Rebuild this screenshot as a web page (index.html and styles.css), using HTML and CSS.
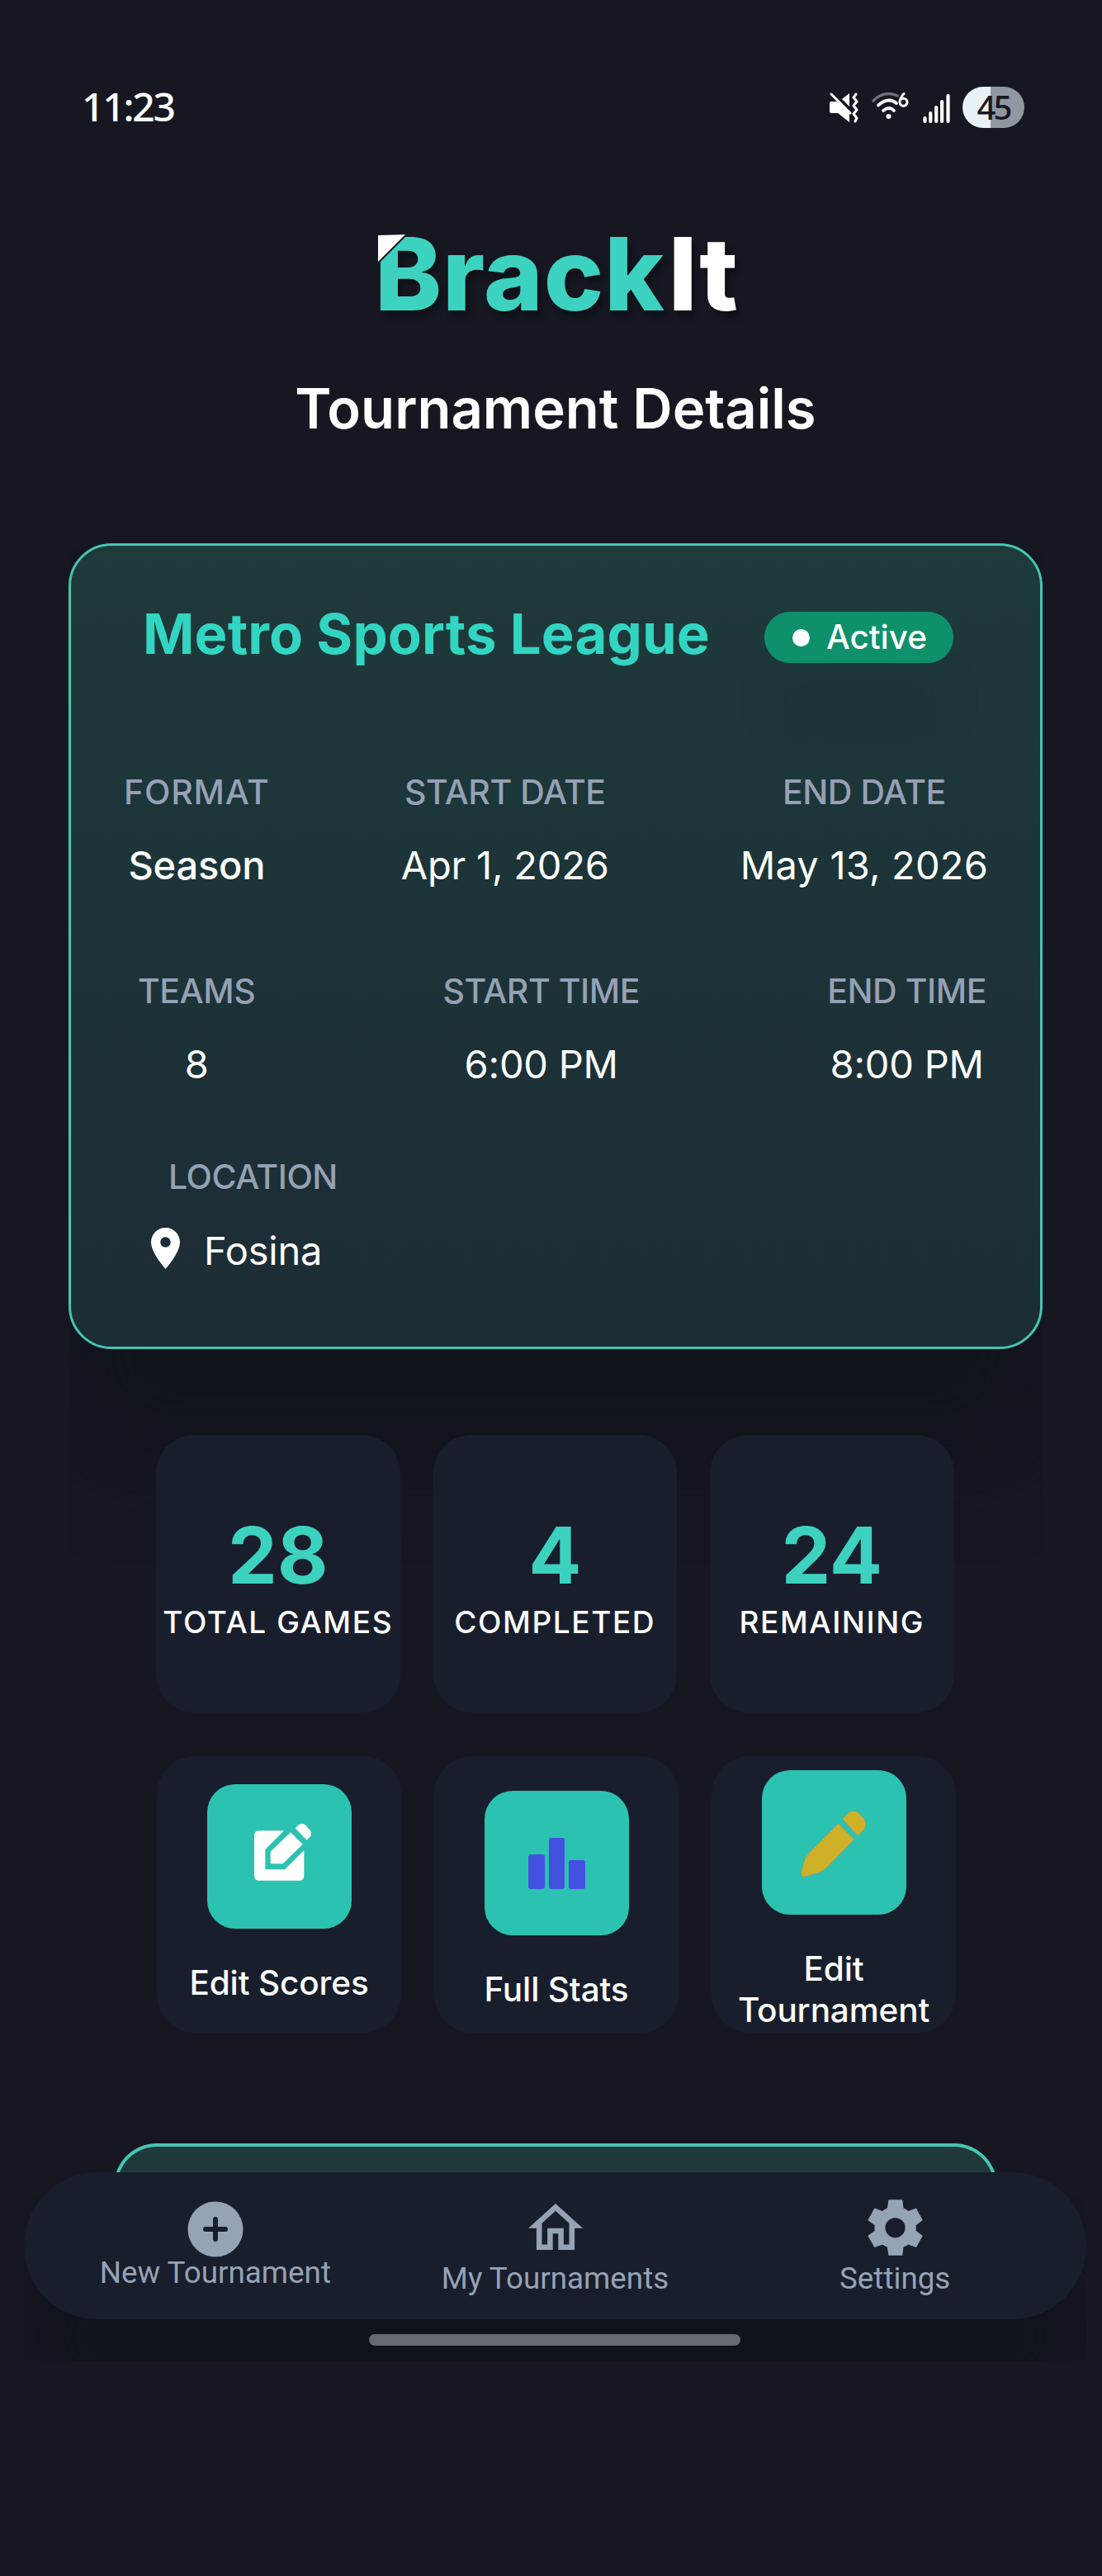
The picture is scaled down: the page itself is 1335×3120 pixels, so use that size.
FILE: index.html
```
<!DOCTYPE html>
<html lang="en">
<head>
<meta charset="utf-8">
<title>BrackIt – Tournament Details</title>
<link rel="stylesheet" href="styles.css">
</head>
<body>
<div class="screen">
  <header class="status">
    <span class="clock">11:23</span>
    <div class="status-icons">
      <svg class="mute" width="36" height="38" viewBox="0 0 36 38"><path d="M1 13q0-2 2-2h7L25 24v12L11 25H3q-2 0-2-2z" fill="#fff"/><path d="M16 8L25 1v16z" fill="#fff"/><path d="M3 2L26 25M33 2l-3 4 4 5-4 5 4 5-4 5 4 5-2 4" fill="none" stroke="#fff" stroke-width="3" stroke-linecap="round" stroke-linejoin="round"/></svg>
      <svg class="wifi" width="46" height="34" viewBox="0 0 46 34"><path d="M2 10Q15-3 31 4" fill="none" stroke="#6d7078" stroke-width="3.4" stroke-linecap="round"/><path d="M8 15.500Q20 5 30 13M14 22q7-6 13 0" fill="none" stroke="#fff" stroke-width="3.800" stroke-linecap="round"/><circle cx="20.500" cy="29" r="3" fill="#fff"/><path d="M39 1.500q-5 5-5 10.500a4.500 4.500 0 1 0 2-4" fill="none" stroke="#fff" stroke-width="3" stroke-linecap="round"/></svg>
      <svg class="signal" width="36" height="38" viewBox="0 0 36 38"><path d="M3.500 31v4M10.300 25v10M17.200 18v17M24.100 11v24M31.500 4v31" stroke="#fff" stroke-width="4.200" stroke-linecap="round"/></svg>
      <span class="battery">45</span>
    </div>
  </header>

  <div class="logo"><span class="brand">Brack</span><span class="brand-end">It</span>
    <svg class="fold" width="50" height="50" viewBox="0 0 50 50"><path d="M0 0H44L2 42H0z" fill="#171722"/><path d="M4 5L37 4 4 37z" fill="#fff"/></svg>
  </div>
  <h1 class="page-title">Tournament Details</h1>

  <div class="card-wrap">
    <section class="card">
      <div class="card-head">
        <h2 class="name">Metro Sports League</h2>
        <span class="badge"><i class="dot"></i>Active</span>
      </div>
      <div class="row row-dates">
        <div class="field"><span class="label wide">FORMAT</span><span class="value strong">Season</span></div>
        <div class="field"><span class="label">START DATE</span><span class="value">Apr 1, 2026</span></div>
        <div class="field"><span class="label">END DATE</span><span class="value end">May 13, 2026</span></div>
      </div>
      <div class="row row-times">
        <div class="field"><span class="label">TEAMS</span><span class="value">8</span></div>
        <div class="field"><span class="label">START TIME</span><span class="value">6:00 PM</span></div>
        <div class="field"><span class="label">END TIME</span><span class="value">8:00 PM</span></div>
      </div>
      <div class="location">
        <span class="label">LOCATION</span>
        <span class="value"><svg width="35" height="50" viewBox="5 2 14 20"><path d="M12 2C8.130 2 5 5.130 5 9c0 5.250 7 13 7 13s7-7.750 7-13c0-3.870-3.130-7-7-7zm0 9.500a2.500 2.500 0 0 1 0-5 2.500 2.500 0 0 1 0 5z" fill="#fff"/></svg>Fosina</span>
      </div>
    </section>
  </div>

  <div class="stats">
    <div class="stat"><b>28</b><span>TOTAL GAMES</span></div>
    <div class="stat"><b>4</b><span>COMPLETED</span></div>
    <div class="stat"><b>24</b><span>REMAINING</span></div>
  </div>

  <div class="actions">
    <div class="action a1"><div class="tile"><svg width="110" height="110" viewBox="0 0 330 330"><g fill="#fff"><path d="M72 82H162L94 150V223H165L235 153V245Q235 263 217 263H72Q54 263 54 245V100Q54 82 72 82z"/><path d="M186 88L230 131 158 202H113V158z"/><path d="M203 73L215 61Q227 52 240 61L257 80Q265 94 257 104L245 116z"/></g></svg></div><span>Edit Scores</span></div>
    <div class="action a2"><div class="tile"><svg width="70" height="62" viewBox="0 0 70 62"><g fill="#4351e0"><rect x="0" y="20" width="20" height="42" rx="3"/><rect x="25" y="0" width="19" height="62" rx="3"/><rect x="49" y="27" width="20" height="35" rx="3"/></g></svg></div><span>Full Stats</span></div>
    <div class="action a3"><div class="tile"><svg width="120" height="120" viewBox="0 0 360 360"><g fill="#ceb029" stroke="#5fa79b" stroke-width="3"><path d="M200 97L258 155 158 258Q146 270 128 277L78 292Q62 294 64 275L76 232Q80 217 92 205z"/><path d="M214 82L238 57Q255 46 272 57L295 82Q306 100 295 118L270 143z"/></g></svg></div><span>Edit<br>Tournament</span></div>
  </div>

  <div class="next-card"></div>

  <div class="nav-wrap">
    <nav class="nav">
      <a class="n1"><svg width="68" height="68" viewBox="0 0 68 68"><circle cx="34" cy="34" r="33.500" fill="#95a3b5"/><path d="M34 22v24M22 34h24" stroke="#191e2c" stroke-width="6" stroke-linecap="round"/></svg>New Tournament</a>
      <a class="n2"><svg width="66" height="58" viewBox="2 3 20 17"><path d="M12 5.690l5 4.500V18h-2v-6H9v6H7v-7.810l5-4.500M12 3L2 12h3v8h6v-6h2v6h6v-8h3L12 3z" fill="#95a3b5"/></svg>My Tournaments</a>
      <a class="n3"><svg width="67" height="68" viewBox="212 72 200 202"><path d="M288 72H338L342 103Q352 107 359 113L388 103 411 146 387 165Q388 174 387 184L411 203 388 245 359 234Q352 240 342 243L338 274H288L283 243Q273 240 266 234L237 245 213 203 238 184Q236 174 238 165L213 146 237 103 266 113Q273 107 283 103z" fill="#95a3b5"/><circle cx="312" cy="174" r="36" fill="#191e2c"/></svg>Settings</a>
    </nav>
    <div class="home-bar"></div>
  </div>
</div>
</body>
</html>
```
FILE: styles.css
```
* { box-sizing: border-box; }
body { margin: 0; background: #171722; font-family: Inter, sans-serif; color: #fcfffe; }
svg { display: block; flex: none; }
.screen { width: 1335px; height: 3120px; overflow: hidden; background: #171722; }

.status { height: 260px; padding: 105px 94px 0 99px; display: flex; justify-content: space-between; align-items: flex-start; }
.clock { margin-top: -1px; font: 500 48px/50px "Noto Sans", sans-serif; letter-spacing: -2.200px; }
.status-icons { display: flex; align-items: flex-start; }
.mute { margin-top: 7px; }
.wifi { margin: 7px 0 0 16px; }
.signal { margin: 7px 0 0 15px; }
.battery { width: 75px; height: 50px; margin-left: 13px; border-radius: 25px; background: linear-gradient(90deg, #e8f2f4 0 34px, #8f98a1 34px); color: #171722; font: 500 40px/49px "Noto Sans", sans-serif; text-align: center; letter-spacing: -3px; }

.logo { position: relative; height: 146px; margin-left: 454px; font-weight: 800; font-size: 122px; line-height: 144px; letter-spacing: 1px; white-space: nowrap; text-shadow: 5px 7px 6px #0e1218; }
.brand { color: #3cd2bf; }
.brand-end { color: #fff; margin-left: 4px; }
.fold { position: absolute; left: 0; top: 20px; }
.page-title { margin: 48px 0 0 11px; height: 80px; line-height: 81px; text-align: center; font-weight: 600; font-size: 67px; }

.card-wrap { margin: 124px 72px 0 83px; height: 977px; clip-path: inset(0 0 -300px 0); }
.card { height: 976px; border: 3px solid #45c6b2; border-radius: 52px; background: linear-gradient(#1f3a3b, #1c3438 45%, #1d2e36 85%, #1b2d35); box-shadow: 0 130px 110px #10141b; }
.card-head { display: flex; align-items: flex-start; justify-content: space-between; padding: 67px 105px 0 87px; height: 243px; }
.name { margin: 0; font-size: 67px; line-height: 80px; font-weight: 700; letter-spacing: 0.150px; color: #32d5c2; white-space: nowrap; }
.badge { margin-top: 13px; width: 229px; height: 62px; border-radius: 31px; background: #0e916b; box-shadow: 0 75px 50px -22px rgba(23, 38, 52, 0.5); font-weight: 450; font-size: 40.500px; line-height: 62px; display: flex; align-items: center; padding-left: 34px; gap: 20px; }
.dot { width: 21px; height: 21px; border-radius: 50%; background: #fff; }
.row { display: flex; justify-content: space-between; }
.field { display: flex; flex-direction: column; align-items: center; }
.row-dates { padding: 27px 63px 0 64px; height: 241px; }
.row-times { padding: 27px 65px 0 81px; height: 226px; }
.label { color: #95a1b4; font-size: 41px; line-height: 56px; font-weight: 450; letter-spacing: -0.450px; white-space: nowrap; }
.wide { letter-spacing: 0.800px; }
.value { margin-top: 33px; font-size: 47px; line-height: 55px; font-weight: 380; letter-spacing: -0.200px; white-space: nowrap; }
.end { letter-spacing: 0.200px; }
.strong { font-weight: 500; letter-spacing: -0.200px; }
.location { display: flex; flex-direction: column; padding: 26px 0 0 97px; }
.location .label { padding-left: 21px; }
.location .value { display: flex; gap: 29px; margin-top: 34px; }

.stats, .actions { display: flex; gap: 40px; margin-left: 189px; position: relative; }
.stats { margin-top: 103px; }
.stat { width: 295.500px; height: 336px; border-radius: 46px; background: #191e2c; display: flex; flex-direction: column; align-items: center; padding-top: 96px; }
.stat b { font-size: 95px; line-height: 100px; color: #3cd2bf; }
.stat span { margin-top: 7px; font-size: 37px; line-height: 48px; font-weight: 450; letter-spacing: 1.600px; white-space: nowrap; }
.actions { margin-top: 53px; margin-left: 190px; }
.action { width: 296px; height: 335px; border-radius: 46px; background: #191e2c; display: flex; flex-direction: column; align-items: center; font-weight: 500; font-size: 40.500px; line-height: 50px; text-align: center; }
.tile { width: 175px; height: 175px; flex: none; border-radius: 34px; background: #2cc2b1; display: flex; justify-content: center; align-items: center; margin-bottom: 41px; }
.action span { letter-spacing: -0.150px; }
.a1 { padding-top: 34px; }
.a2 { padding-top: 42px; }
.a3 { padding-top: 17px; }
.a1 svg { margin: -7px 0 0 13px; }
.a2 svg { margin-left: 1px; }
.a3 svg { margin: 8px 2px 0 0; }

.next-card { margin: 134px 127px 0 138px; height: 90px; border: 4px solid #45c6b2; border-bottom: 0; border-radius: 52px 52px 0 0; background: #1f393a; }
.nav-wrap { position: relative; margin: -55px 19px 0 29px; height: 228px; overflow: hidden; }
.nav { height: 178px; border-radius: 89px; background: #191e2c; box-shadow: 0 110px 80px #10141b; display: flex; padding: 0 26px 0 26px; }
.nav a { flex: 1; display: flex; flex-direction: column; align-items: center; color: #95a3b5; font: 400 36.800px/42px Roboto, sans-serif; white-space: nowrap; }
.n1 svg { margin: 35px 0 -2px; }
.n2 svg { margin: 37px 0 13px; }
.n3 svg { margin: 33px 0 7px; }
.home-bar { width: 450px; height: 14px; border-radius: 7px; background: #656970; margin: 18px 0 0 418px; position: relative; }
```
